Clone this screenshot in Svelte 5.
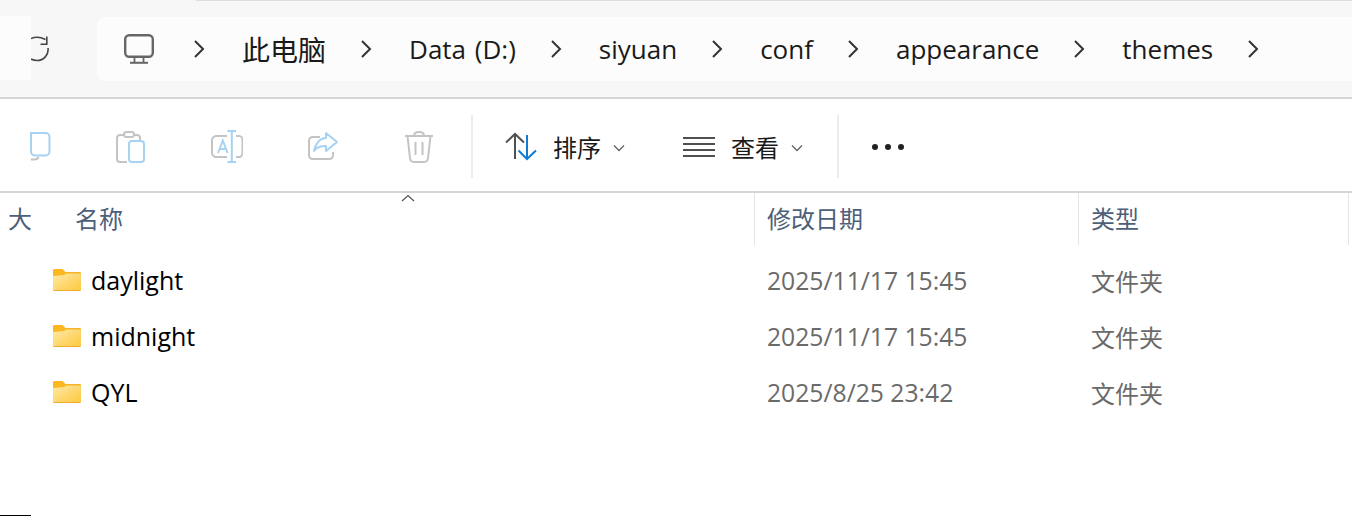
<script lang="ts">
  const crumbs = ['此电脑', 'Data (D:)', 'siyuan', 'conf', 'appearance', 'themes'];
  const files = [
    { name: 'daylight', date: '2025/11/17 15:45', kind: '文件夹' },
    { name: 'midnight', date: '2025/11/17 15:45', kind: '文件夹' },
    { name: 'QYL', date: '2025/8/25 23:42', kind: '文件夹' },
  ];
</script>

<div class="page">
  <div class="topline"></div>
  <header class="topbar">
    <div class="stub"></div>
    <svg class="refresh" width="18" height="26" viewBox="0 0 18 26" fill="none" stroke="#444" stroke-width="1.6">
      <path d="M0 2.600C4 .8 9 .8 14.500 3.500" />
      <path d="M15.800 .6V8.200H9.500" />
      <path d="M17 12C18 19 12.500 24.500 6 24.500 4 24.500 2 24 0 23" />
    </svg>
    <nav class="address">
      <svg class="monitor" width="30" height="30" viewBox="0 0 30 30" fill="none" stroke="#666" stroke-width="2.4">
        <rect x="1.2" y="1.2" width="27.6" height="21.6" rx="4" />
        <path d="M10.500 23v6M19.500 23v6" stroke-width="1.8" />
        <path d="M6 28.800h18" stroke-width="2" />
      </svg>
      {#each crumbs as crumb, i}
        <svg class="chev" width="12" height="20" viewBox="0 0 12 20" fill="none" stroke="#333" stroke-width="2">
          <path d="M2 2l8 8-8 8" />
        </svg>
        <span class="crumb" class:root={i === 0}>{crumb}</span>
      {/each}
      <svg class="chev" width="12" height="20" viewBox="0 0 12 20" fill="none" stroke="#333" stroke-width="2">
        <path d="M2 2l8 8-8 8" />
      </svg>
    </nav>
  </header>

  <div class="toolbar">
    <div class="actions">
      <svg width="32" height="32" viewBox="0 0 32 32" fill="none" stroke-width="2">
        <path d="M12 28.500H15.500C18 28.500 19 27.500 19.500 26" stroke="#c4c4c4" />
        <path d="M12 2h14.500a4 4 0 0 1 4 4v14.500a4 4 0 0 1-4 4H16a4 4 0 0 1-4-4z" stroke="#a6d2f3" />
      </svg>
      <svg width="32" height="34" viewBox="0 0 32 34" fill="none" stroke-width="2">
        <path d="M12 32H5C3 32 2 31 2 29V8C2 6 3 5 5 5H9M19 5H22C24 5 25 6 25 8V10" stroke="#c4c4c4" />
        <rect x="9" y="2" width="10" height="5" rx="2.500" stroke="#c4c4c4" />
        <rect x="14" y="11" width="15" height="21" rx="3" stroke="#a6d2f3" />
      </svg>
      <svg width="32" height="34" viewBox="0 0 32 34" fill="none" stroke-width="2">
        <path d="M16 6H5C3 6 1 8 1 10V23C1 25 3 27 5 27H16M25 6H28C30 6 31.500 8 31.500 10V23C31.500 25 30 27 28 27H25" stroke="#c4c4c4" />
        <path d="M16.500 1H25M16.500 32H25M20.800 1V32" stroke="#a6d2f3" />
        <path d="M7 23 11.800 10.500 16.500 23M8.700 19H15" stroke="#a6d2f3" />
      </svg>
      <svg width="32" height="32" viewBox="0 0 32 32" fill="none" stroke-width="2">
        <path d="M13 6H6C3.500 6 2 7.500 2 10V24C2 26.500 3.500 28 6 28H22C24.500 28 26 26.500 26 24V21" stroke="#c4c4c4" />
        <path d="M19 2 30 11 19 20V15C14 15 9 17 7 20 8 13 13 7 19 7z" stroke="#a6d2f3" stroke-linejoin="round" />
      </svg>
      <svg width="32" height="34" viewBox="0 0 32 34" fill="none" stroke="#c4c4c4" stroke-width="2">
        <path d="M2 6H30M11 6C11 3 13 2 16 2S21 3 21 6" />
        <path d="M4.500 6 7 28C7.300 31 8.500 32 11 32H21C23.500 32 24.700 31 25 28L27.500 6" />
        <path d="M12.500 12V25M19.500 12V25" />
      </svg>
    </div>
    <div class="sep first"></div>
    <button class="tool sort">
      <svg width="32" height="30" viewBox="0 0 32 30" fill="none" stroke-width="2">
        <path d="M10 27V2M1 10.500 10 2 19 10.500" stroke="#505050" />
        <path d="M22 3V27M13.500 18.500 22 27 31 18.500" stroke="#0f7bd3" />
      </svg>
      <span>排序</span>
      <svg class="down" width="12" height="8" viewBox="0 0 12 8" fill="none" stroke="#666" stroke-width="1.400">
        <path d="M1 1.500 6 6.500 11 1.500" />
      </svg>
    </button>
    <button class="tool view">
      <svg width="32" height="22" viewBox="0 0 32 22" fill="none" stroke="#505050" stroke-width="2">
        <path d="M0 2H32M0 8H32M0 14H32M0 20H32" />
      </svg>
      <span>查看</span>
      <svg class="down" width="12" height="8" viewBox="0 0 12 8" fill="none" stroke="#666" stroke-width="1.400">
        <path d="M1 1.500 6 6.500 11 1.500" />
      </svg>
    </button>
    <div class="sep second"></div>
    <div class="more"><i></i><i></i><i></i></div>
  </div>

  <section class="files">
    <div class="grid head">
      <div class="cell name">
        <span class="size">大</span>
        <span class="title">名称</span>
        <svg class="caret" width="14" height="8" viewBox="0 0 14 8" fill="none" stroke="#555" stroke-width="1.200">
          <path d="M1 7 7 1.500 13 7" />
        </svg>
      </div>
      <div class="cell">修改日期</div>
      <div class="cell">类型</div>
      <div class="cell"></div>
    </div>
    {#each files as file}
      <div class="grid row">
        <div class="fname">
          <svg width="28" height="22" viewBox="0 0 28 22">
            <defs>
              <linearGradient id="fill" x1="0" y1="0" x2="1" y2="1">
                <stop offset="0" stop-color="#fee9a6" />
                <stop offset="1" stop-color="#fdc93f" />
              </linearGradient>
            </defs>
            <path d="M0 1.500C0 .6.600 0 1.500 0H9.500L12.500 3H26.500C27.400 3 28 3.600 28 4.500V9H0z" fill="#fbb81e" />
            <path d="M0 7 11 6 13.500 3.500H26.500C27.400 3.500 28 4 28 5V20.500C28 21.400 27.400 22 26.500 22H1.500C.6 22 0 21.400 0 20.500z" fill="#eeaf2e" />
            <path d="M0 7 11 6 13.500 4.500H26.500C27.400 4.500 28 5 28 5.700V19.500C28 20.400 27.400 21 26.500 21H1.500C.6 21 0 20.400 0 19.500z" fill="url(#fill)" />
          </svg>
          <span>{file.name}</span>
        </div>
        <div class="meta">{file.date}</div>
        <div class="meta kind">{file.kind}</div>
        <div></div>
      </div>
    {/each}
  </section>

  <div class="foot"></div>
</div>

<style>
  :global(body) {
    margin: 0;
    background: #fff;
  }
  .page {
    height: 516px;
    display: flex;
    flex-direction: column;
    overflow: hidden;
    position: relative;
    font-family: "Open Sans", "Noto Sans CJK SC", sans-serif;
  }
  .topline {
    position: absolute;
    top: 0;
    left: 196px;
    right: 0;
    height: 1px;
    background: #dcdcdc;
  }
  .topbar {
    height: 99px;
    flex: none;
    box-sizing: border-box;
    display: flex;
    align-items: flex-start;
    background: #f7f7f7;
    border-bottom: 2px solid #d5d5d5;
    padding-top: 16px;
  }
  .stub {
    width: 31px;
    height: 64px;
    flex: none;
    background: #fcfcfc;
  }
  .refresh {
    flex: none;
    margin-top: 20px;
  }
  .address {
    flex: 1;
    height: 64px;
    margin: 1px 0 0 48px;
    padding-left: 27px;
    display: flex;
    align-items: center;
    background: #fcfcfc;
    border-radius: 8px 0 0 8px;
    color: #1a1a1a;
  }
  .monitor {
    flex: none;
    margin: -1px 5px 0 0;
  }
  .chev {
    flex: none;
    margin: 0 37px 0 34px;
  }
  .crumb {
    font-size: 26px;
    word-spacing: 2px;
    white-space: nowrap;
  }
  .crumb.root {
    font-size: 28px;
  }
  .toolbar {
    height: 94px;
    flex: none;
    box-sizing: border-box;
    display: flex;
    align-items: center;
    padding: 3px 0 0 19px;
    border-bottom: 2px solid #d5d5d5;
    color: #1a1a1a;
  }
  .actions {
    display: flex;
    align-items: center;
    gap: 64px;
    width: 416px;
  }
  .sep {
    width: 2px;
    height: 63px;
    background: #ececec;
    flex: none;
  }
  .sep.first {
    margin-left: 36px;
  }
  .tool {
    display: flex;
    align-items: center;
    padding: 0;
    border: 0;
    background: none;
    color: inherit;
    font: inherit;
    font-size: 24px;
  }
  .tool span {
    margin-left: 16px;
  }
  .down {
    margin: 2px 0 0 12px;
  }
  .sort {
    margin-left: 32px;
  }
  .view {
    margin-left: 58px;
  }
  .sep.second {
    margin-left: 34px;
  }
  .more {
    display: flex;
    gap: 7px;
    margin-left: 33px;
  }
  .more i {
    width: 6px;
    height: 6px;
    border-radius: 50%;
    background: #222;
    display: block;
  }
  .files {
    flex: none;
  }
  .grid {
    display: grid;
    grid-template-columns: 754px 324px 270px 4px;
  }
  .head {
    height: 52px;
    color: #4c607a;
    font-size: 24px;
  }
  .cell {
    position: relative;
    padding-left: 12px;
    border-left: 1px solid #e4e4e4;
    line-height: 52px;
    white-space: nowrap;
  }
  .cell.name {
    padding-left: 8px;
    border-left: 0;
    display: flex;
  }
  .title {
    margin-left: 43px;
  }
  .caret {
    position: absolute;
    left: 401px;
    top: 1px;
  }
  .row {
    height: 56px;
    align-items: center;
  }
  .head + .row {
    margin-top: 7px;
  }
  .fname {
    display: flex;
    align-items: center;
    padding-left: 53px;
    color: #000;
    font-size: 25px;
  }
  .fname svg {
    margin: -1px 10px 0 0;
  }
  .meta {
    padding-left: 13px;
    color: #6a6a6a;
    white-space: nowrap;
    font-size: 24.700px;
  }
  .meta.kind {
    font-size: 24px;
  }
  .foot {
    margin-top: auto;
    width: 31px;
    height: 1px;
    background: #000;
  }
</style>
